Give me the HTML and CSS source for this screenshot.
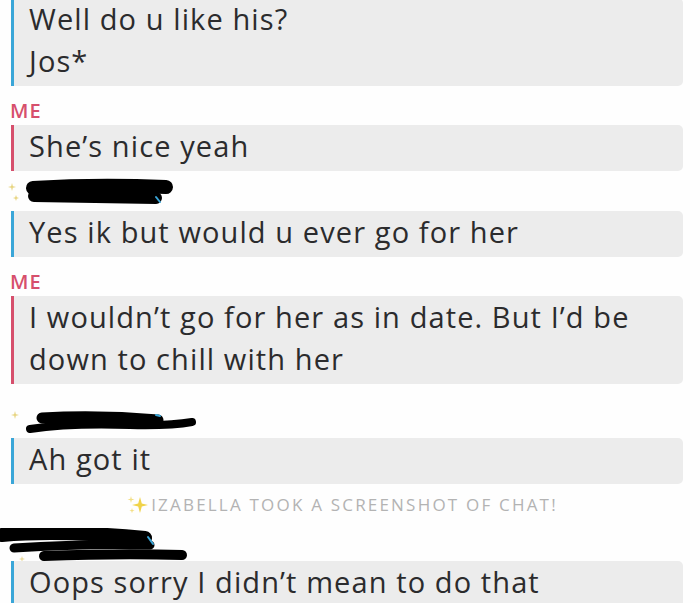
FILE: index.html
```html
<!DOCTYPE html>
<html>
<head>
  <title>Chat</title>
  <link rel="stylesheet" href="styles.css">
</head>
<body>

<div class="chat">
  <div class="bubble them first">Well do u like his?<br>Jos*</div>

  <div class="label me-label">ME</div>
  <div class="bubble me">She’s nice yeah</div>

  <div class="name name-1">
    <svg width="180" height="32" viewBox="0 0 180 32">
      <path d="M6 6 L7 10 L6 14 L5 10 Z M2 10 L6 9 L10 10 L6 11 Z" fill="#e6d27a"/>
      <path d="M10 18 L11 21 L10 24 L9 21 Z M7 21 L10 20 L13 21 L10 22 Z" fill="#e6d27a"/>
      <path d="M27 11 Q90 7 160 10" stroke="#000" stroke-width="14" stroke-linecap="round" fill="none"/>
      <path d="M28 19 Q90 20 150 21" stroke="#000" stroke-width="12" stroke-linecap="round" fill="none"/>
      <path d="M150 20 L154 25" stroke="#3aa6d8" stroke-width="2" stroke-linecap="round"/>
    </svg>
  </div>
  <div class="bubble them">Yes ik but would u ever go for her</div>

  <div class="label me-label">ME</div>
  <div class="bubble me">I wouldn’t go for her as in date. But I’d be<br>down to chill with her</div>

  <div class="name name-2">
    <svg width="190" height="26" viewBox="0 0 190 26">
      <path d="M5 1 L6 5 L5 9 L4 5 Z M1 5 L5 4 L9 5 L5 6 Z" fill="#e6d27a"/>
      <path d="M32 8 Q90 5 148 10" stroke="#000" stroke-width="11" stroke-linecap="round" fill="none"/>
      <path d="M20 19 Q60 13 120 15 Q160 16 182 12" stroke="#000" stroke-width="8" stroke-linecap="round" fill="none"/>
      <path d="M146 5 L150 6" stroke="#3aa6d8" stroke-width="2" stroke-linecap="round"/>
    </svg>
  </div>
  <div class="bubble them">Ah got it</div>

  <div class="notice">
    <svg class="spark" width="24" height="20" viewBox="0 0 24 20">
      <path d="M14 2 L15.8 8.5 L22 10 L15.8 11.5 L14 18 L12.2 11.5 L6 10 L12.2 8.5 Z" fill="#f0d34a"/>
      <path d="M5 1 L5.7 3.8 L8.5 4.5 L5.7 5.2 L5 8 L4.3 5.2 L1.5 4.5 L4.3 3.8 Z" fill="#f3df86"/>
      <path d="M6 13 L6.6 15 L8.6 15.6 L6.6 16.2 L6 18.2 L5.4 16.2 L3.4 15.6 L5.4 15 Z" fill="#f3df86"/>
    </svg>IZABELLA TOOK A SCREENSHOT OF CHAT!
  </div>

  <div class="name name-3">
    <svg width="190" height="36" viewBox="0 0 190 36">
      <path d="M2 7 Q60 2 145 10" stroke="#000" stroke-width="14" stroke-linecap="round" fill="none"/>
      <path d="M14 20 Q90 15 150 17" stroke="#000" stroke-width="9" stroke-linecap="round" fill="none"/>
      <path d="M44 28 Q120 25 182 27" stroke="#000" stroke-width="10" stroke-linecap="round" fill="none"/>
      <path d="M148 9 L153 16" stroke="#3aa6d8" stroke-width="2" stroke-linecap="round"/>
      <path d="M22 28 L23 31 L22 34 L21 31 Z M19 31 L22 30 L25 31 L22 32 Z" fill="#ead99a"/>
    </svg>
  </div>
  <div class="bubble them">Oops sorry I didn’t mean to do that</div>
</div>

</body>
</html>
```

FILE: styles.css
```css
body { margin: 0; background: #fefefe; font-family: "Open Sans", Lato, sans-serif; color: #2b2b2d; overflow: hidden; }
.chat { display: flex; flex-direction: column; padding: 0 17px 0 11px; margin-top: -2px; }
.bubble { background: #ececec; border-left: 3px solid #3aa6d8; border-radius: 0 5px 5px 0; padding: 0 0 4px 15px; font-size: 29px; line-height: 42px; letter-spacing: 1.1px; }
.bubble.me { border-left-color: #d64f6c; }
.label { font-size: 20px; line-height: 22px; font-weight: 600; margin: 14px 0 3px -1px; }
.me-label { color: #d64f6c; letter-spacing: 1px; }
.name { display: flex; }
.name-1 { margin: 6px 0 2px -5px; height: 32px; }
.name-2 { margin: 26px 0 2px -1px; height: 26px; }
.name-3 { margin: 9px 0 0 -11px; height: 33px; }
.notice { display: flex; align-items: center; justify-content: center; margin: 11px 0 4px -10px; font-size: 17px; line-height: 18px; letter-spacing: 2.2px; color: #b3b3b3; }
.spark { margin-right: 1px; }
```
